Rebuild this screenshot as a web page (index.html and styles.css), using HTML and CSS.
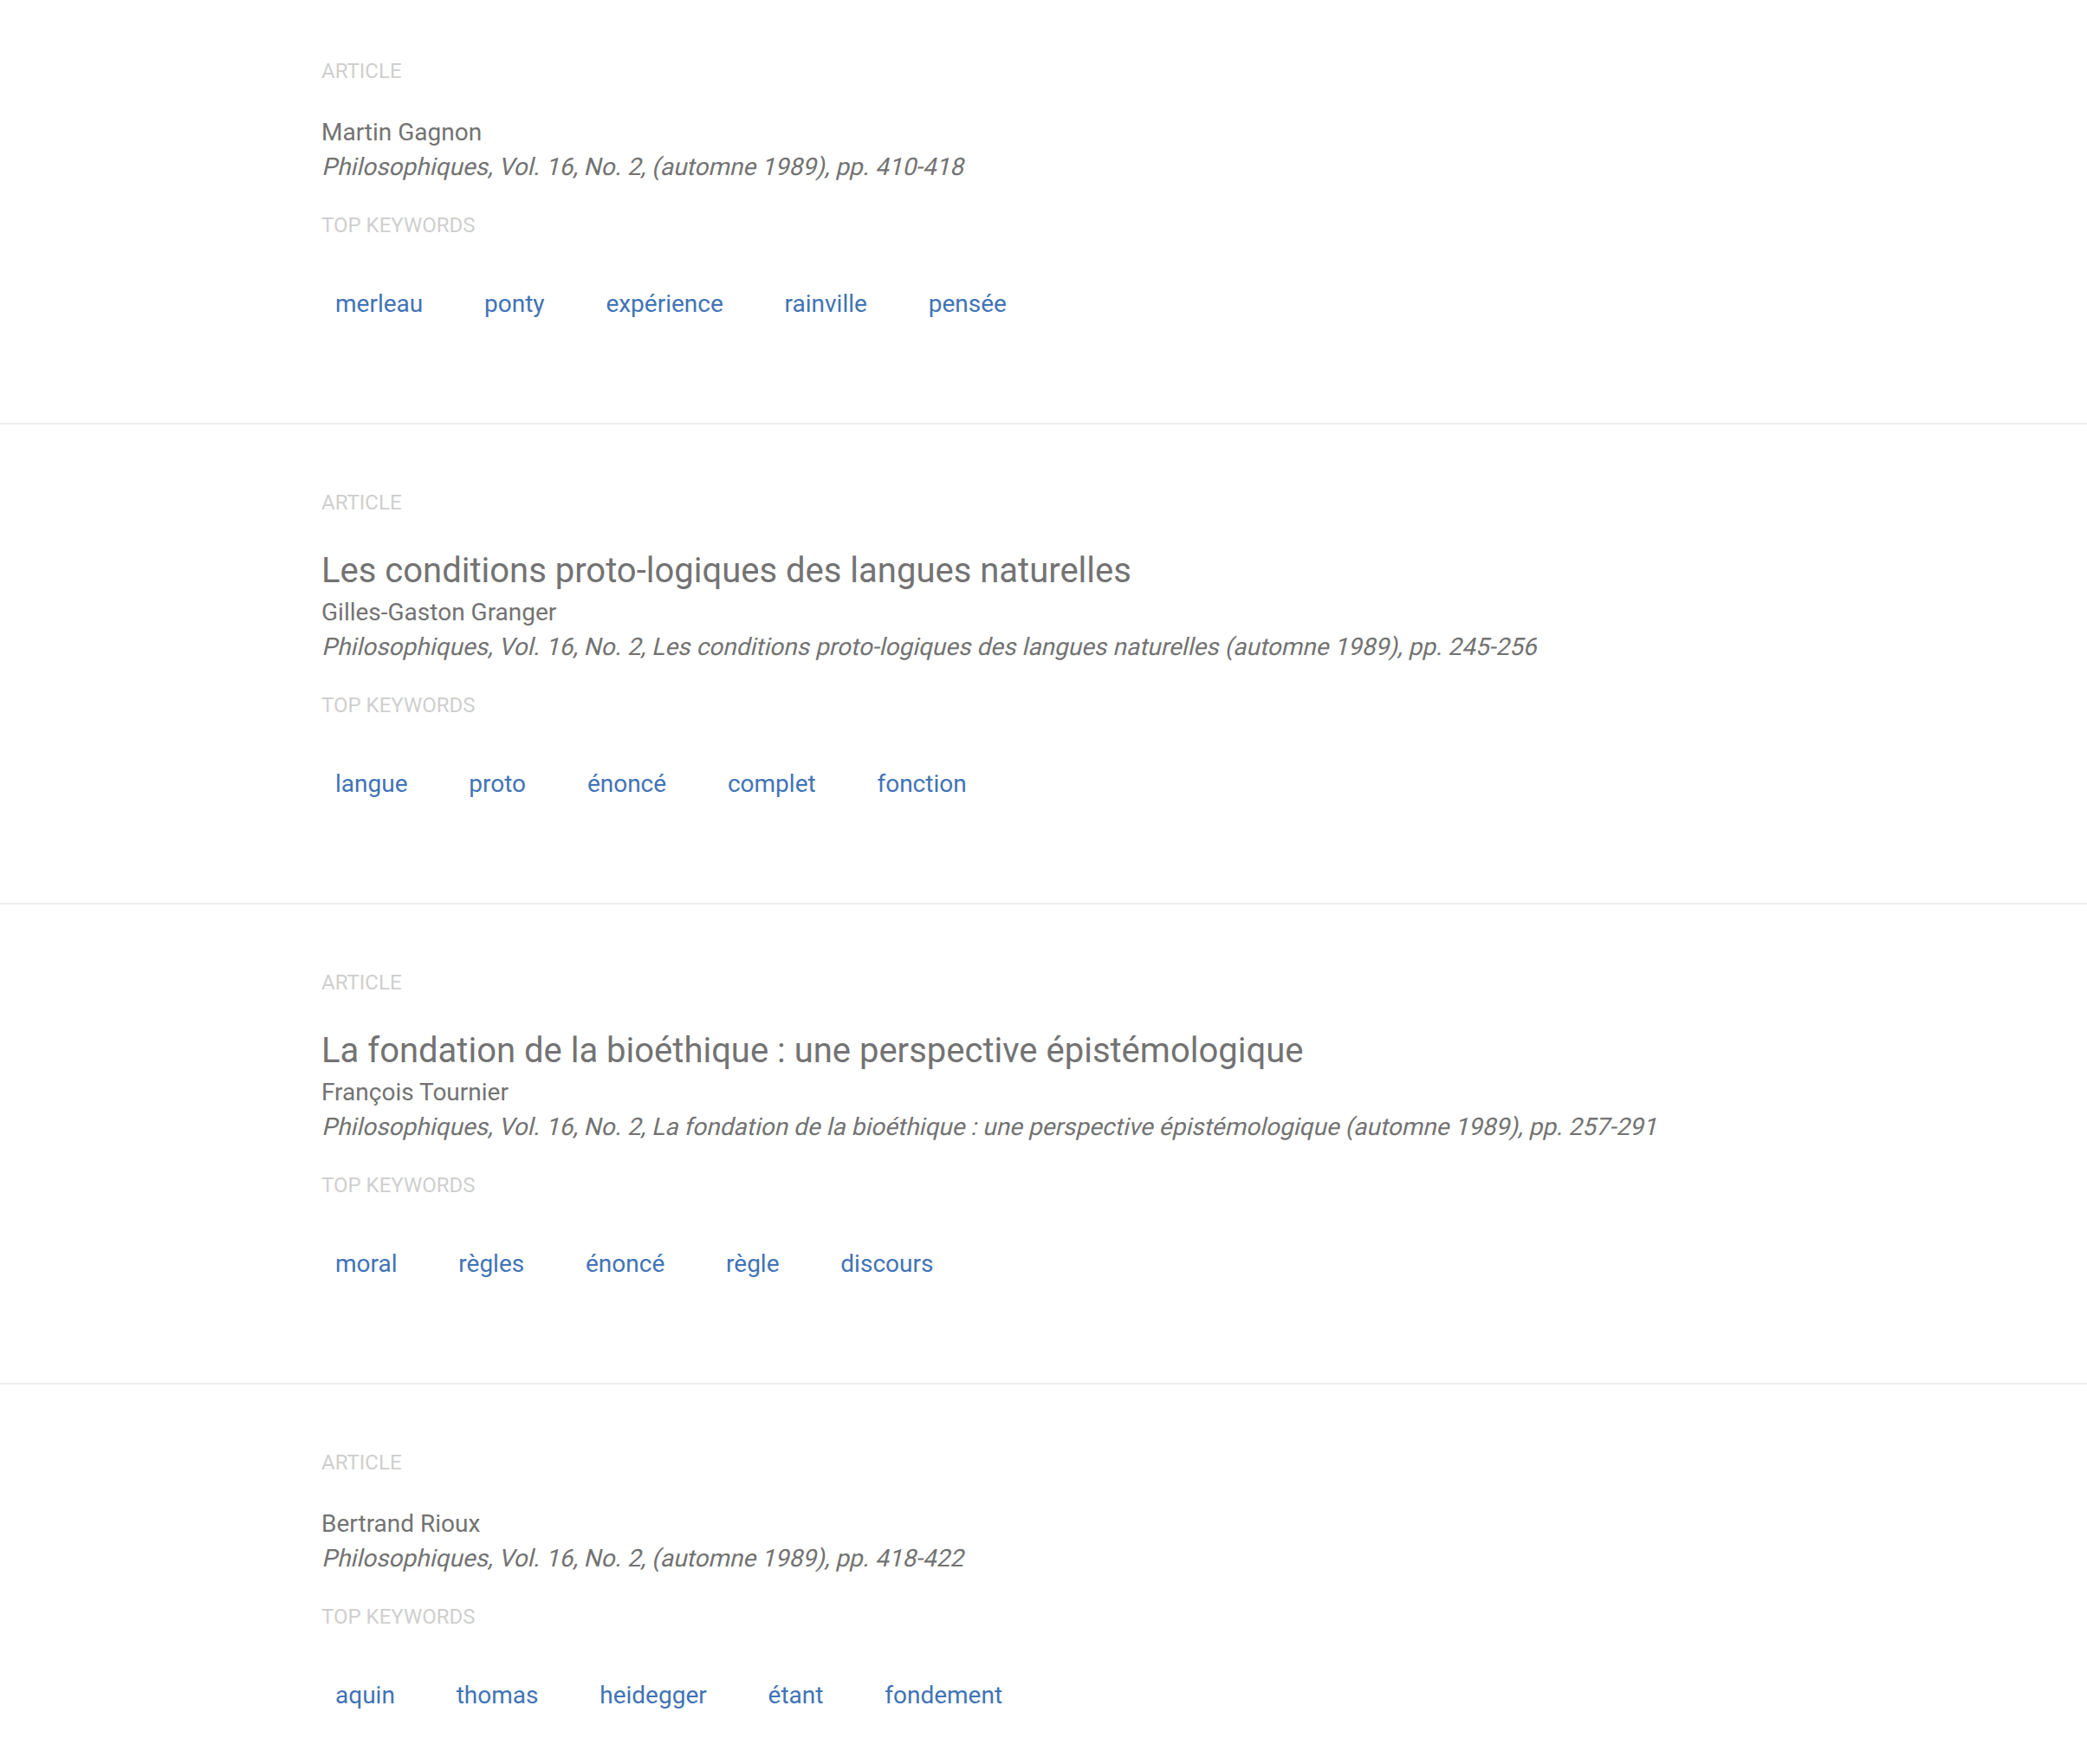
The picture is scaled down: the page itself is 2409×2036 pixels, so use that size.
FILE: index.html
```html
<!DOCTYPE html>
<html lang="fr">
<head>
<meta charset="utf-8">
<title>Articles</title>
<link rel="stylesheet" href="styles.css">
</head>
<body>
<main class="list">
  <section class="item">
    <div class="type">ARTICLE</div>
    <div class="author">Martin Gagnon</div>
    <div class="source"><span class="oblique">Philosophiques, Vol. 16, No. 2, (automne 1989), pp. 410-418</span></div>
    <div class="kw-label">TOP KEYWORDS</div>
    <ul class="keywords">
      <li class="kw">merleau</li>
      <li class="kw">ponty</li>
      <li class="kw">expérience</li>
      <li class="kw">rainville</li>
      <li class="kw">pensée</li>
    </ul>
  </section>
  <section class="item">
    <div class="type">ARTICLE</div>
    <h2 class="title">Les conditions proto-logiques des langues naturelles</h2>
    <div class="author">Gilles-Gaston Granger</div>
    <div class="source"><span class="oblique">Philosophiques, Vol. 16, No. 2, Les conditions proto-logiques des langues naturelles (automne 1989), pp. 245-256</span></div>
    <div class="kw-label">TOP KEYWORDS</div>
    <ul class="keywords">
      <li class="kw">langue</li>
      <li class="kw">proto</li>
      <li class="kw">énoncé</li>
      <li class="kw">complet</li>
      <li class="kw">fonction</li>
    </ul>
  </section>
  <section class="item">
    <div class="type">ARTICLE</div>
    <h2 class="title">La fondation de la bioéthique : une perspective épistémologique</h2>
    <div class="author">François Tournier</div>
    <div class="source"><span class="oblique">Philosophiques, Vol. 16, No. 2, La fondation de la bioéthique : une perspective épistémologique (automne 1989), pp. 257-291</span></div>
    <div class="kw-label">TOP KEYWORDS</div>
    <ul class="keywords">
      <li class="kw">moral</li>
      <li class="kw">règles</li>
      <li class="kw">énoncé</li>
      <li class="kw">règle</li>
      <li class="kw">discours</li>
    </ul>
  </section>
  <section class="item">
    <div class="type">ARTICLE</div>
    <div class="author">Bertrand Rioux</div>
    <div class="source"><span class="oblique">Philosophiques, Vol. 16, No. 2, (automne 1989), pp. 418-422</span></div>
    <div class="kw-label">TOP KEYWORDS</div>
    <ul class="keywords">
      <li class="kw">aquin</li>
      <li class="kw">thomas</li>
      <li class="kw">heidegger</li>
      <li class="kw">étant</li>
      <li class="kw">fondement</li>
    </ul>
  </section>
</main>
</body>
</html>
```

FILE: styles.css
```css
html, body {
  margin: 0;
  padding: 0;
  background: #ffffff;
}

body {
  font-family: Roboto, "Noto Sans", "Liberation Sans", sans-serif;
  color: #757575;
}

.list {
  display: flex;
  flex-direction: column;
}

.item {
  padding: 72px 0 117px 371px;
  border-bottom: 2px solid #eeeeee;
}

.item:first-child {
  padding-top: 64px;
}

.type {
  font-size: 24px;
  line-height: 36px;
  color: #cfcfcf;
  margin-bottom: 33px;
}

.title {
  margin: 0;
  font-size: 40px;
  line-height: 56px;
  font-weight: 400;
  color: #737373;
}

.author {
  font-size: 28px;
  line-height: 40px;
  color: #737373;
}

.source {
  font-size: 28px;
  line-height: 40px;
  color: #737373;
}

/* the reference shows a slanted (synthesised) oblique of the regular face */
.oblique {
  display: inline-block;
  font-style: normal;
  transform: skewX(-13deg);
  transform-origin: 0 30px;
}

.kw-label {
  margin-top: 29px;
  font-size: 24px;
  line-height: 36px;
  color: #cfcfcf;
}

.keywords {
  list-style: none;
  margin: 53px 0 0 0;
  padding: 0;
  display: flex;
  gap: 38.8px;
}

.kw {
  padding: 0 16px;
  font-size: 28px;
  line-height: 40px;
  color: #4173b6;
}
```
